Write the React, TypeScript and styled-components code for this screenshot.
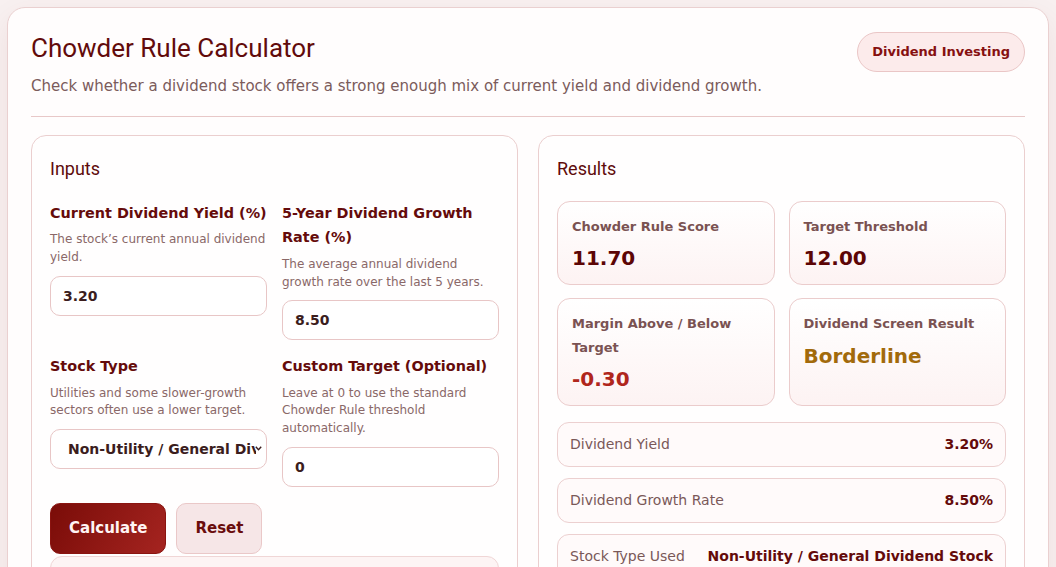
import React, { useState } from "react";
import styled, { createGlobalStyle } from "styled-components";

const GlobalStyle = createGlobalStyle`
  * { box-sizing: border-box; }
  html, body { margin: 0; padding: 0; background: #f8f0f0; }
  body {
    font-family: "DejaVu Sans", Verdana, sans-serif;
    color: #3a1f1f;
  }
`;

const Page = styled.div`
  padding: 7px;
`;

const Card = styled.main`
  background: #fffdfd;
  border: 1px solid #ead0d0;
  border-radius: 18px;
  padding: 24px 23px 23px;
  box-shadow: 0 10px 30px rgba(110, 20, 20, 0.07);
`;

const Header = styled.header`
  display: flex;
  justify-content: space-between;
  align-items: flex-start;
  gap: 20px;
  padding-bottom: 18px;
  border-bottom: 1px solid #e8c8c8;
`;

const Title = styled.h1`
  margin: 1px 0 0;
  font-family: Roboto, "Liberation Sans", sans-serif;
  font-weight: 400;
  font-size: 26px;
  line-height: 1.2;
  color: #620b0b;
`;

const Subtitle = styled.p`
  margin: 10px 0 0;
  font-size: 15px;
  line-height: 1.6;
  color: #7b5b5b;
`;

const Badge = styled.span`
  flex-shrink: 0;
  height: 40px;
  line-height: 38px;
  padding: 0 14px;
  border-radius: 999px;
  border: 1px solid #eac6c6;
  background: #fcebeb;
  color: #861010;
  font-weight: 700;
  font-size: 13px;
`;

const Columns = styled.div`
  display: grid;
  grid-template-columns: 1fr 1fr;
  gap: 20px;
  margin-top: 18px;
  align-items: start;
`;

const Panel = styled.section`
  background: #fffefe;
  border: 1px solid #ebcfcf;
  border-radius: 15px;
  padding: 18px;
`;

const PanelTitle = styled.h2`
  margin: 4px 0 21px;
  font-family: Roboto, "Liberation Sans", sans-serif;
  font-weight: 400;
  font-size: 18px;
  line-height: 1.2;
  color: #5e0b0b;
`;

const FieldGrid = styled.div`
  display: grid;
  grid-template-columns: 1fr 1fr;
  column-gap: 15px;
  row-gap: 14px;
`;

const Field = styled.div`
  display: flex;
  flex-direction: column;
  min-width: 0;
`;

const Label = styled.label`
  font-size: 14.4px;
  font-weight: 700;
  line-height: 1.7;
  color: #650b0b;
  margin-bottom: 6px;
`;

const Hint = styled.p`
  margin: 0 0 9px;
  font-size: 12px;
  line-height: 1.48;
  color: #8a6868;
`;

const controlStyles = `
  width: 100%;
  height: 40px;
  border: 1px solid #e8c6c6;
  border-radius: 10px;
  background: #ffffff;
  font-family: "DejaVu Sans", Verdana, sans-serif;
  font-weight: 700;
  font-size: 14px;
  color: #3b1d1d;
  outline: none;
`;

const TextInput = styled.input`
  ${controlStyles}
  padding: 0 12px;
`;

const SelectWrap = styled.div`
  position: relative;
`;

const Select = styled.select`
  ${controlStyles}
  appearance: none;
  -webkit-appearance: none;
  padding: 0 10px 0 17px;
`;

const Chevron = styled.svg`
  position: absolute;
  right: 5px;
  top: 17px;
  width: 7px;
  height: 5px;
  pointer-events: none;
`;

const Actions = styled.div`
  display: flex;
  gap: 10px;
  margin-top: 16px;
`;

const Button = styled.button<{ $primary?: boolean }>`
  padding: 14px 18px;
  font-family: "DejaVu Sans", Verdana, sans-serif;
  font-weight: 700;
  font-size: 15px;
  line-height: 21px;
  border-radius: 10px;
  cursor: pointer;
  border: 1px solid ${(p) => (p.$primary ? "#8a1410" : "#eac8c8")};
  background: ${(p) =>
    p.$primary ? "linear-gradient(120deg, #7a0c08 0%, #a52420 100%)" : "#f6e6e7"};
  color: ${(p) => (p.$primary ? "#fff4f4" : "#6a0d0d")};
`;

const Note = styled.div`
  margin-top: 2px;
  padding: 12px 14px;
  border: 1px solid #f0d6d6;
  border-radius: 12px;
  background: #fdf4f4;
  font-size: 12px;
  line-height: 1.5;
  color: #7b5b5b;
`;

const StatGrid = styled.div`
  display: grid;
  grid-template-columns: 1fr 1fr;
  column-gap: 14px;
  row-gap: 13px;
`;

const Stat = styled.div`
  padding: 13px 14px 14px;
  border: 1px solid #ebcccc;
  border-radius: 13px;
  background: linear-gradient(180deg, #ffffff 0%, #fdf3f3 100%);
`;

const StatLabel = styled.div`
  font-size: 13px;
  font-weight: 700;
  line-height: 1.8;
  color: #7a5252;
`;

type Tone = "dark" | "neg" | "warn";

const toneColor: Record<Tone, string> = {
  dark: "#5c0505",
  neg: "#b0261c",
  warn: "#a26a0b",
};

const StatValue = styled.div<{ $tone: Tone }>`
  margin-top: 8px;
  font-size: 20px;
  font-weight: 700;
  line-height: 1.2;
  color: ${(p) => toneColor[p.$tone]};
`;

const Rows = styled.div`
  display: flex;
  flex-direction: column;
  gap: 11px;
  margin-top: 16px;
`;

const Row = styled.div`
  display: flex;
  justify-content: space-between;
  align-items: center;
  gap: 12px;
  padding: 11px 12px;
  border: 1px solid #ecd0d0;
  border-radius: 12px;
  background: #fffafa;
  font-size: 14px;
  line-height: 21px;
`;

const RowLabel = styled.span`
  color: #7a5858;
  white-space: nowrap;
`;

const RowValue = styled.span`
  font-weight: 700;
  color: #640a0a;
  text-align: right;
`;

export default function App() {
  const [yieldPct, setYieldPct] = useState("3.20");
  const [growth, setGrowth] = useState("8.50");
  const [stockType, setStockType] = useState("general");
  const [custom, setCustom] = useState("0");

  return (
    <Page>
      <GlobalStyle />
      <Card>
        <Header>
          <div>
            <Title>Chowder Rule Calculator</Title>
            <Subtitle>
              Check whether a dividend stock offers a strong enough mix of current yield and
              dividend growth.
            </Subtitle>
          </div>
          <Badge>Dividend Investing</Badge>
        </Header>

        <Columns>
          <Panel>
            <PanelTitle>Inputs</PanelTitle>
            <FieldGrid>
              <Field>
                <Label htmlFor="yield">Current Dividend Yield (%)</Label>
                <Hint>The stock’s current annual dividend yield.</Hint>
                <TextInput id="yield" value={yieldPct} onChange={(e) => setYieldPct(e.target.value)} />
              </Field>
              <Field>
                <Label htmlFor="growth">5-Year Dividend Growth Rate (%)</Label>
                <Hint>The average annual dividend growth rate over the last 5 years.</Hint>
                <TextInput id="growth" value={growth} onChange={(e) => setGrowth(e.target.value)} />
              </Field>
              <Field>
                <Label htmlFor="type">Stock Type</Label>
                <Hint>Utilities and some slower-growth sectors often use a lower target.</Hint>
                <SelectWrap>
                  <Select id="type" value={stockType} onChange={(e) => setStockType(e.target.value)}>
                    <option value="general">Non-Utility / General Dividend Stock</option>
                    <option value="utility">Utility / Slower-Growth Sector</option>
                  </Select>
                  <Chevron viewBox="0 0 7 5" aria-hidden="true">
                    <path d="M0.8 0.8 L3.5 3.8 L6.2 0.8" fill="none" stroke="#3b1d1d" strokeWidth="1.4" />
                  </Chevron>
                </SelectWrap>
              </Field>
              <Field>
                <Label htmlFor="custom">Custom Target (Optional)</Label>
                <Hint>Leave at 0 to use the standard Chowder Rule threshold automatically.</Hint>
                <TextInput id="custom" value={custom} onChange={(e) => setCustom(e.target.value)} />
              </Field>
            </FieldGrid>
            <Actions>
              <Button $primary>Calculate</Button>
              <Button>Reset</Button>
            </Actions>
            <Note>
              The Chowder Rule adds current yield and 5-year dividend growth to screen dividend
              stocks quickly.
            </Note>
          </Panel>

          <Panel>
            <PanelTitle>Results</PanelTitle>
            <StatGrid>
              <Stat>
                <StatLabel>Chowder Rule Score</StatLabel>
                <StatValue $tone="dark">11.70</StatValue>
              </Stat>
              <Stat>
                <StatLabel>Target Threshold</StatLabel>
                <StatValue $tone="dark">12.00</StatValue>
              </Stat>
              <Stat>
                <StatLabel>Margin Above / Below Target</StatLabel>
                <StatValue $tone="neg">-0.30</StatValue>
              </Stat>
              <Stat>
                <StatLabel>Dividend Screen Result</StatLabel>
                <StatValue $tone="warn">Borderline</StatValue>
              </Stat>
            </StatGrid>
            <Rows>
              <Row>
                <RowLabel>Dividend Yield</RowLabel>
                <RowValue>3.20%</RowValue>
              </Row>
              <Row>
                <RowLabel>Dividend Growth Rate</RowLabel>
                <RowValue>8.50%</RowValue>
              </Row>
              <Row>
                <RowLabel>Stock Type Used</RowLabel>
                <RowValue>Non-Utility / General Dividend Stock</RowValue>
              </Row>
              <Row>
                <RowLabel>Threshold Source</RowLabel>
                <RowValue>Standard Rule</RowValue>
              </Row>
            </Rows>
          </Panel>
        </Columns>
      </Card>
    </Page>
  );
}
